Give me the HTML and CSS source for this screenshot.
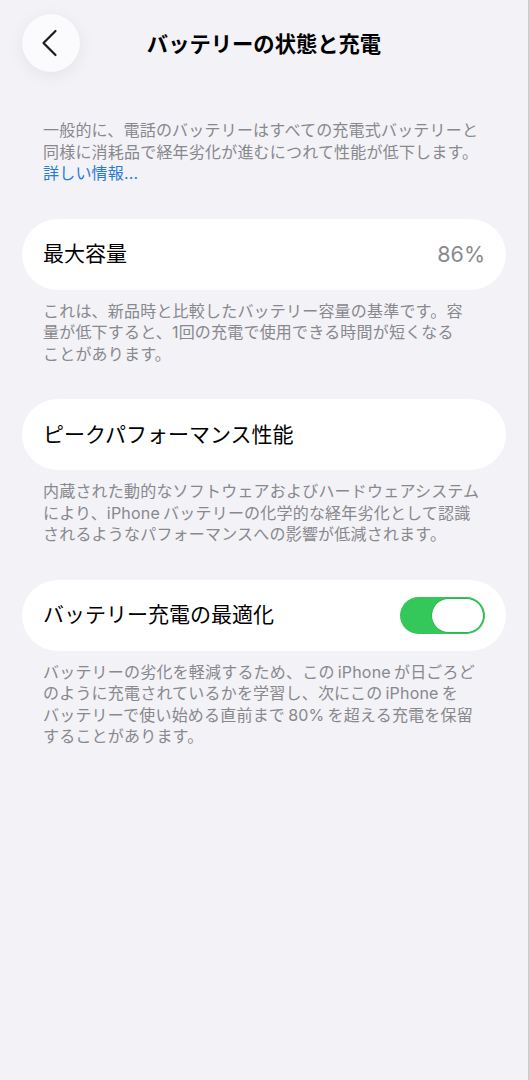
FILE: index.html
```html
<!DOCTYPE html>
<html lang="ja">
<head>
<meta charset="utf-8">
<title>バッテリーの状態と充電</title>
<link rel="stylesheet" href="styles.css">
</head>
<body>
<div class="screen">
  <header class="nav">
    <button class="back" aria-label="戻る">
      <svg width="58" height="58" viewBox="0 0 58 58" aria-hidden="true">
        <path d="M33.5 17 L21.5 29 L33.5 41" fill="none" stroke="#1c1c1e" stroke-width="2.2" stroke-linecap="round" stroke-linejoin="round"/>
      </svg>
    </button>
    <h1 class="title">バッテリーの状態と充電</h1>
    <span class="nav-spacer"></span>
  </header>

  <main class="content">
    <p class="note intro">
      <span class="line">一般的に、電話のバッテリーはすべての充電式バッテリーと</span>
      <span class="line">同様に消耗品で経年劣化が進むにつれて性能が低下します。</span>
      <span class="line"><a class="link" href="#">詳しい情報...</a></span>
    </p>

    <section class="group">
      <div class="cell">
        <span class="cell-label">最大容量</span>
        <span class="cell-value">86%</span>
      </div>
      <p class="note">
        <span class="line">これは、新品時と比較したバッテリー容量の基準です。容</span>
        <span class="line">量が低下すると、1回の充電で使用できる時間が短くなる</span>
        <span class="line">ことがあります。</span>
      </p>
    </section>

    <section class="group">
      <div class="cell">
        <span class="cell-label">ピークパフォーマンス性能</span>
      </div>
      <p class="note">
        <span class="line">内蔵された動的なソフトウェアおよびハードウェアシステム</span>
        <span class="line">により、iPhone&#8201;バッテリーの化学的な経年劣化として認識</span>
        <span class="line">されるようなパフォーマンスへの影響が低減されます。</span>
      </p>
    </section>

    <section class="group">
      <div class="cell">
        <span class="cell-label">バッテリー充電の最適化</span>
        <span class="toggle on" role="switch" aria-checked="true"><span class="knob"></span></span>
      </div>
      <p class="note">
        <span class="line">バッテリーの劣化を軽減するため、この&#8201;iPhone&#8201;が日ごろど</span>
        <span class="line">のように充電されているかを学習し、次にこの&#8201;iPhone&#8201;を</span>
        <span class="line">バッテリーで使い始める直前まで&#8201;80%&#8201;を超える充電を保留</span>
        <span class="line">することがあります。</span>
      </p>
    </section>
  </main>
</div>
</body>
</html>
```

FILE: styles.css
```css
* {
  box-sizing: border-box;
}

html,
body {
  margin: 0;
  padding: 0;
  background: #f2f2f7;
}

body {
  font-family: Inter, "Noto Sans CJK JP", sans-serif;
  color: #000;
}

.screen {
  width: 529px;
  min-height: 1080px;
  border-right: 1px solid #c9c9ce;
  background: #f2f2f7;
}

/* navigation bar */
.nav {
  display: grid;
  grid-template-columns: 58px 1fr 58px;
  align-items: center;
  padding: 14px 22px 0;
}

.back {
  width: 58px;
  height: 58px;
  padding: 0;
  border: none;
  border-radius: 50%;
  background: #fbfbfd;
  box-shadow: 0 4px 18px rgba(0, 0, 0, 0.06), 0 0 2px rgba(0, 0, 0, 0.03);
  display: flex;
  align-items: center;
  justify-content: center;
}

.back svg {
  display: block;
}

.title {
  margin: 0;
  text-align: center;
  font-family: "Noto Sans CJK JP", sans-serif;
  font-size: 21.3px;
  font-weight: 700;
  line-height: 28px;
}

/* content */
.content {
  padding: 0 22px;
}

.note {
  margin: 0;
  padding: 0 21px;
  font-size: 16px;
  letter-spacing: 0.2px;
  line-height: 21.5px;
  color: #88888d;
}

.note .line {
  display: block;
  white-space: nowrap;
}

.intro {
  margin-top: 48px;
}

.link {
  color: #2a7bd9;
  text-decoration: none;
}

.group {
  margin-top: 34px;
}

.group .note {
  margin-top: 11px;
}

.cell {
  height: 71px;
  padding: 0 21px;
  border-radius: 36px;
  background: #fff;
  display: flex;
  align-items: center;
  justify-content: space-between;
}

.cell-label {
  font-size: 21px;
  line-height: 28px;
  color: #000;
}

.cell-value {
  font-size: 21.5px;
  line-height: 28px;
  color: #8a8a8e;
}

/* switch */
.toggle {
  width: 85px;
  height: 37px;
  border-radius: 19px;
  background: #e5e5ea;
  padding: 2px;
  display: flex;
}

.toggle.on {
  background: #34c759;
  justify-content: flex-end;
}

.knob {
  width: 51px;
  height: 33px;
  border-radius: 17px;
  background: #fff;
  box-shadow: 0 0 0 0.5px rgba(0, 100, 30, 0.35);
}
```
